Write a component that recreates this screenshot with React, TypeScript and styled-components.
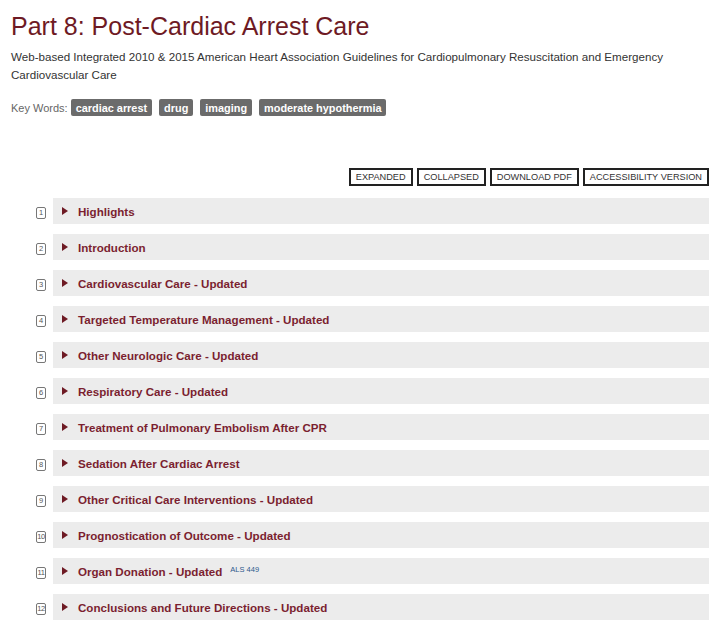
import styled, { createGlobalStyle } from 'styled-components';

const GlobalStyle = createGlobalStyle`
  body {
    margin: 0;
    background: #fff;
    font-family: "Liberation Sans", Arial, sans-serif;
  }
`;

const Page = styled.div`
  padding: 11px 11px 0;
`;

const Title = styled.h1`
  margin: 0;
  font-size: 25px;
  line-height: 30px;
  font-weight: normal;
  color: #6e1a24;
`;

const Subtitle = styled.p`
  margin: 7px 0 0;
  font-size: 11.6px;
  line-height: 18px;
  color: #333;
`;

const KeyWords = styled.div`
  display: flex;
  align-items: center;
  gap: 7px;
  margin-top: 15px;
`;

const KeyLabel = styled.span`
  font-size: 11px;
  color: #666;
  margin-right: -4px;
`;

const Tag = styled.span`
  display: inline-flex;
  align-items: center;
  height: 17px;
  padding: 0 5px;
  border-radius: 2px;
  background: #6b6b6b;
  color: #fff;
  font-size: 10.9px;
  font-weight: bold;
`;

const Toolbar = styled.div`
  display: flex;
  justify-content: flex-end;
  gap: 4px;
  margin-top: 52px;
`;

const ToolButton = styled.button`
  height: 18px;
  padding: 0 5px;
  border: 2px solid #222;
  background: #fff;
  color: #333;
  font-family: inherit;
  font-size: 9.2px;
  line-height: 14px;
  text-transform: uppercase;
  cursor: pointer;
`;

const Sections = styled.div`
  display: flex;
  flex-direction: column;
  gap: 10px;
  margin-top: 12px;
`;

const Row = styled.div`
  display: flex;
  align-items: center;
  padding-left: 25px;
`;

const NumBox = styled.span`
  box-sizing: border-box;
  width: 10px;
  height: 12px;
  margin: 3px 7px 0 0;
  border: 1px solid #777;
  border-radius: 2px;
  display: flex;
  align-items: center;
  justify-content: center;
  font-size: 7.5px;
  letter-spacing: -0.4px;
  color: #555;
`;

const Bar = styled.div`
  flex: 1;
  height: 26px;
  display: flex;
  align-items: center;
  padding-left: 9px;
  background: #ececec;
`;

const Caret = styled.span`
  width: 0;
  height: 0;
  border-top: 4px solid transparent;
  border-bottom: 4px solid transparent;
  border-left: 6px solid #6e1a24;
  margin-right: 10px;
`;

const SectionTitle = styled.span`
  font-size: 11.6px;
  font-weight: bold;
  color: #7b1f30;
`;

const Ref = styled.sup`
  margin-left: 8px;
  font-size: 7.5px;
  color: #2d5a8c;
  position: relative;
  top: -2px;
`;

const tags = ['cardiac arrest', 'drug', 'imaging', 'moderate hypothermia'];

const buttons = ['Expanded', 'Collapsed', 'Download PDF', 'Accessibility Version'];

const sections: { title: string; ref?: string }[] = [
  { title: 'Highlights' },
  { title: 'Introduction' },
  { title: 'Cardiovascular Care - Updated' },
  { title: 'Targeted Temperature Management - Updated' },
  { title: 'Other Neurologic Care - Updated' },
  { title: 'Respiratory Care - Updated' },
  { title: 'Treatment of Pulmonary Embolism After CPR' },
  { title: 'Sedation After Cardiac Arrest' },
  { title: 'Other Critical Care Interventions - Updated' },
  { title: 'Prognostication of Outcome - Updated' },
  { title: 'Organ Donation - Updated', ref: 'ALS 449' },
  { title: 'Conclusions and Future Directions - Updated' },
];

const App = () => {
  return (
    <Page>
      <GlobalStyle />
      <Title>Part 8: Post-Cardiac Arrest Care</Title>
      <Subtitle>
        Web-based Integrated 2010 &amp; 2015 American Heart Association Guidelines for
        Cardiopulmonary Resuscitation and Emergency Cardiovascular Care
      </Subtitle>
      <KeyWords>
        <KeyLabel>Key Words:</KeyLabel>
        {tags.map((t) => (
          <Tag key={t}>{t}</Tag>
        ))}
      </KeyWords>
      <Toolbar>
        {buttons.map((b) => (
          <ToolButton key={b}>{b}</ToolButton>
        ))}
      </Toolbar>
      <Sections>
        {sections.map((s, i) => (
          <Row key={s.title}>
            <NumBox>{i + 1}</NumBox>
            <Bar>
              <Caret />
              <SectionTitle>{s.title}</SectionTitle>
              {s.ref && <Ref>{s.ref}</Ref>}
            </Bar>
          </Row>
        ))}
      </Sections>
    </Page>
  );
};

export default App;
